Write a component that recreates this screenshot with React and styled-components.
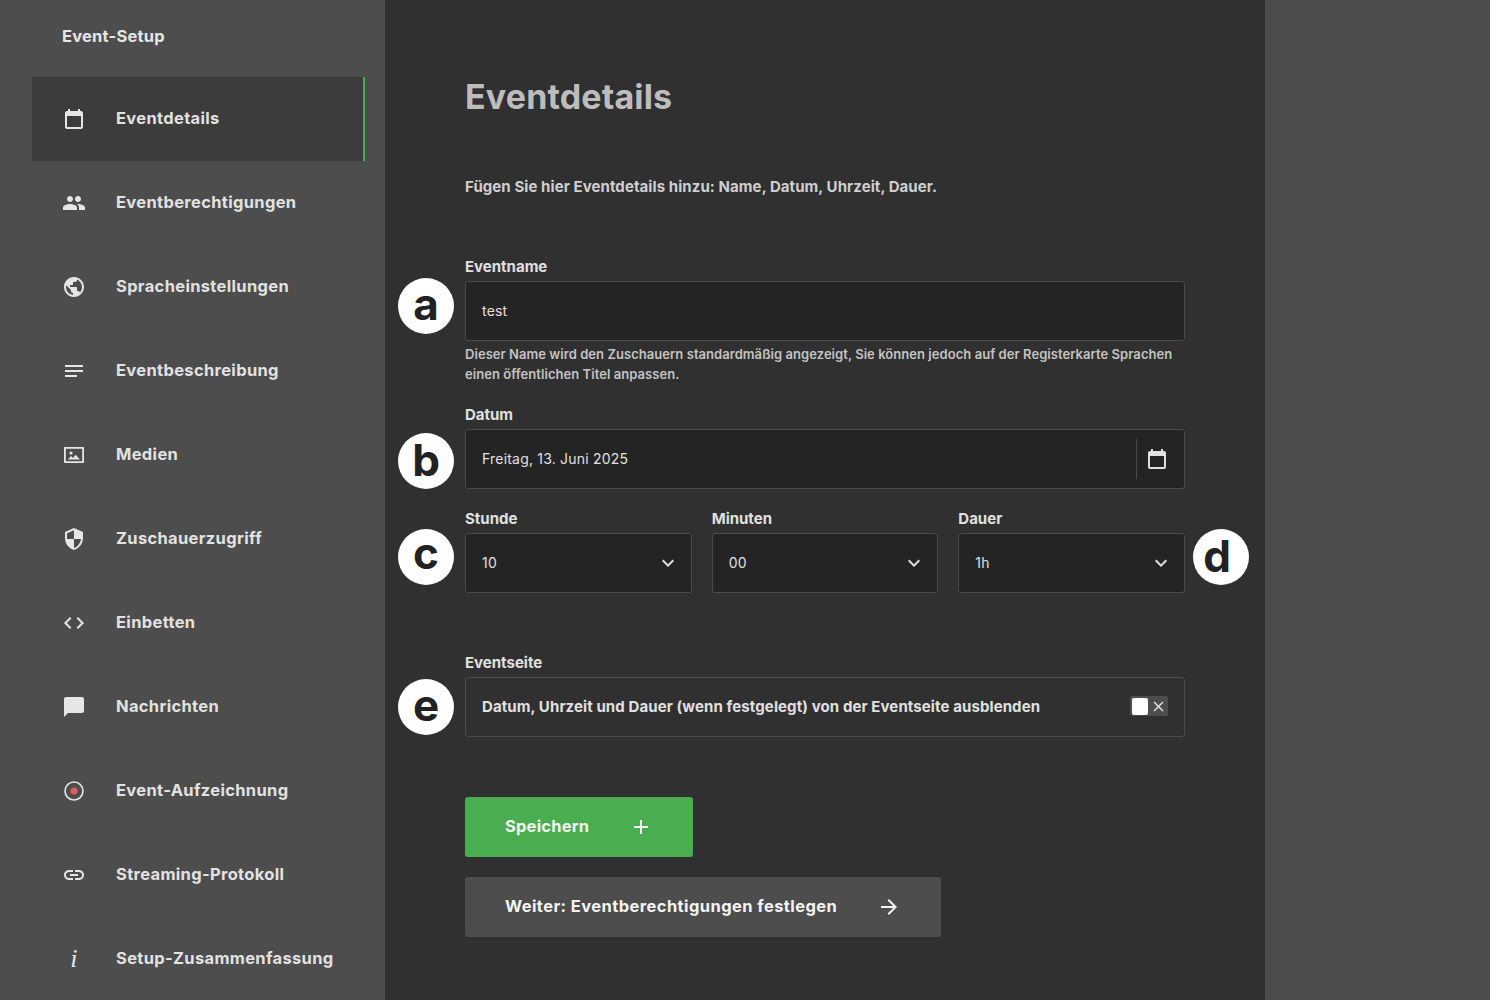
import React from "react";
import styled, { createGlobalStyle } from "styled-components";
import {
  MdPeople, MdPublic, MdNotes, MdSecurity, MdCode, MdChatBubble, MdLink,
  MdKeyboardArrowDown, MdClose, MdAdd, MdArrowForward,
} from "react-icons/md";

const GlobalStyle = createGlobalStyle`
  html, body { margin: 0; padding: 0; background: #4d4d4d; overflow: hidden; }
  * { box-sizing: border-box; }
  body { font-family: Inter, "Liberation Sans", sans-serif; }
`;

const Page = styled.div`
  display: flex;
  width: 1490px;
  height: 1000px;
  background: #4d4d4d;
  overflow: hidden;
`;

const Sidebar = styled.nav`
  flex: 0 0 385px;
  padding: 0 20px 0 32px;
`;

const SidebarTitle = styled.div`
  height: 77px;
  padding: 27px 0 0 30px;
  font-size: 16.5px;
  line-height: 18px;
  font-weight: 700;
  letter-spacing: 0.2px;
  color: #e6e6e6;
`;

const NavItem = styled.div`
  display: flex;
  align-items: center;
  height: 84px;
  padding-left: 30px;
  font-size: 16.5px;
  font-weight: 700;
  letter-spacing: 0.33px;
  color: #e2e2e2;
  background: ${(p) => (p.$active ? "#3c3c3c" : "transparent")};
  border-right: 2px solid ${(p) => (p.$active ? "#4caf50" : "transparent")};
`;

const NavIcon = styled.span`
  display: flex;
  justify-content: center;
  align-items: center;
  flex: 0 0 24px;
  width: 24px;
  height: 24px;
  margin-right: 30px;
  font-size: 24px;
  color: #e6e6e6;
`;

const NavLabel = styled.span`
  margin-bottom: 2px;
`;

const InfoGlyph = styled.span`
  font-family: "Liberation Serif", serif;
  font-style: italic;
  font-weight: 400;
  font-size: 26px;
  line-height: 24px;
`;

const Main = styled.main`
  flex: 0 0 880px;
  padding: 0 80px;
  background: #303030;
`;

const Heading = styled.h1`
  margin: 0;
  padding-top: 78px;
  font-size: 34px;
  line-height: 38px;
  font-weight: 700;
  letter-spacing: 0.15px;
  color: #bdbdbd;
`;

const Intro = styled.p`
  margin: 0;
  padding-top: 61px;
  height: 141px;
  font-size: 15px;
  line-height: 20px;
  font-weight: 700;
  letter-spacing: 0.08px;
  color: #cfcfcf;
`;

const Field = styled.div`
  position: relative;
  margin-bottom: ${(p) => p.$gap || 0}px;
`;

const Label = styled.div`
  height: 20px;
  margin-bottom: 4px;
  font-size: 15px;
  line-height: 20px;
  font-weight: 700;
  color: #e0e0e0;
`;

const InputBox = styled.div`
  display: flex;
  align-items: center;
  height: 60px;
  padding: 0 16px;
  font-size: 14px;
  letter-spacing: 0.2px;
  color: #e0e0e0;
  background: ${(p) => (p.$plain ? "transparent" : "#242424")};
  border: 1px solid #4a4a4a;
  border-radius: 3px;
`;

const InputText = styled.span`
  flex: 1;
  margin-bottom: 2px;
  ${(p) => p.$bold && "font-size: 15px; font-weight: 700; letter-spacing: 0.1px;"}
`;

const Hint = styled.div`
  padding: 3px 0 1px;
  font-size: 13px;
  line-height: 20px;
  font-weight: 600;
  letter-spacing: 0.05px;
  white-space: nowrap;
  color: #c4c4c4;
`;

const DateAddon = styled.span`
  display: flex;
  align-items: center;
  justify-content: center;
  align-self: center;
  width: 40px;
  height: 40px;
  margin-right: -8px;
  color: #e0e0e0;
  border-left: 1px solid #4a4a4a;
`;

const TimeRow = styled.div`
  display: grid;
  grid-template-columns: repeat(3, 1fr);
  gap: 20px;
  margin-bottom: 60px;
`;

const Chevron = styled(MdKeyboardArrowDown)`
  font-size: 24px;
  margin-right: -5px;
  color: #e0e0e0;
`;

const Toggle = styled.span`
  display: flex;
  align-items: center;
  justify-content: space-between;
  width: 38px;
  height: 20px;
  margin-bottom: 2px;
  padding: 1px 1px 1px 2px;
  background: #4d4d4d;
  border-radius: 2px;
  font-size: 17px;
  color: #e6e6e6;
`;

const Knob = styled.span`
  width: 16px;
  height: 17px;
  background: #fff;
  border-radius: 2px;
`;

const Marker = styled.span`
  position: absolute;
  top: ${(p) => p.$top}px;
  ${(p) => (p.$right ? "right: -64px;" : "left: -67px;")}
  display: flex;
  align-items: center;
  justify-content: center;
  width: 56px;
  height: 56px;
  padding-bottom: ${(p) => p.$lift ?? 5}px;
  padding-right: ${(p) => p.$nudge ?? 0}px;
  background: #fff;
  border-radius: 50%;
  font-family: Inter, sans-serif;
  font-size: 44px;
  line-height: 1;
  font-weight: 700;
  color: #222;
`;

const Actions = styled.div`
  display: flex;
  flex-direction: column;
  align-items: flex-start;
  gap: 20px;
  padding-top: 60px;
`;

const Button = styled.button`
  display: flex;
  align-items: center;
  justify-content: space-between;
  width: ${(p) => p.$width}px;
  height: 60px;
  padding: 0 40px;
  border: 0;
  border-radius: 3px;
  font-family: inherit;
  font-size: 16.5px;
  font-weight: 700;
  letter-spacing: ${(p) => (p.$primary ? "0.2px" : "0.42px")};
  color: #f4f4f4;
  background: ${(p) => (p.$primary ? "#4aad50" : "#4d4d4d")};
  svg { font-size: 24px; }
`;

const ButtonLabel = styled.span`
  margin-bottom: 2px;
`;

const CalendarIcon = () => (
  <svg width="24" height="24" viewBox="0 0 24 24" fill="currentColor">
    <path d="M19 4h-1V2h-2v2H8V2H6v2H5c-1.1 0-2 .9-2 2v14c0 1.1.9 2 2 2h14c1.1 0 2-.9 2-2V6c0-1.1-.9-2-2-2zm0 16H5V9h14v11z" />
  </svg>
);

const MediaIcon = () => (
  <svg width="24" height="24" viewBox="0 0 24 24" fill="currentColor">
    <path d="M21 4H3c-.6 0-1 .4-1 1v14c0 .6.4 1 1 1h18c.6 0 1-.4 1-1V5c0-.6-.4-1-1-1zm-.8 14.2H3.8V5.8h16.4v12.4z" />
    <circle cx="9" cy="10" r="1.6" />
    <path d="M6 16.5l3-3.5 2 2 2.5-3.2 4.5 4.7z" />
  </svg>
);

const RecordIcon = () => (
  <svg width="24" height="24" viewBox="0 0 24 24">
    <circle cx="12" cy="12" r="9" fill="none" stroke="#e6e6e6" strokeWidth="1.6" />
    <circle cx="12" cy="12" r="3.6" fill="#e05a5f" />
  </svg>
);

const navItems = [
  { label: "Eventdetails", icon: <CalendarIcon /> },
  { label: "Eventberechtigungen", icon: <MdPeople /> },
  { label: "Spracheinstellungen", icon: <MdPublic /> },
  { label: "Eventbeschreibung", icon: <MdNotes /> },
  { label: "Medien", icon: <MediaIcon /> },
  { label: "Zuschauerzugriff", icon: <MdSecurity /> },
  { label: "Einbetten", icon: <MdCode /> },
  { label: "Nachrichten", icon: <MdChatBubble /> },
  { label: "Event-Aufzeichnung", icon: <RecordIcon /> },
  { label: "Streaming-Protokoll", icon: <MdLink /> },
  { label: "Setup-Zusammenfassung", icon: <InfoGlyph>i</InfoGlyph> },
];

const times = [
  { label: "Stunde", value: "10" },
  { label: "Minuten", value: "00" },
  { label: "Dauer", value: "1h" },
];

export default function App() {
  return (
    <Page>
      <GlobalStyle />
      <Sidebar>
        <SidebarTitle>Event-Setup</SidebarTitle>
        {navItems.map((item, i) => (
          <NavItem key={item.label} $active={i === 0}>
            <NavIcon>{item.icon}</NavIcon>
            <NavLabel>{item.label}</NavLabel>
          </NavItem>
        ))}
      </Sidebar>
      <Main>
        <Heading>Eventdetails</Heading>
        <Intro>Fügen Sie hier Eventdetails hinzu: Name, Datum, Uhrzeit, Dauer.</Intro>
        <Field $gap={20}>
          <Label>Eventname</Label>
          <InputBox><InputText>test</InputText></InputBox>
          <Hint>
            Dieser Name wird den Zuschauern standardmäßig angezeigt, Sie können jedoch auf der Registerkarte Sprachen
            <br />
            einen öffentlichen Titel anpassen.
          </Hint>
          <Marker $top={21}>a</Marker>
        </Field>
        <Field $gap={20}>
          <Label>Datum</Label>
          <InputBox>
            <InputText>Freitag, 13. Juni 2025</InputText>
            <DateAddon><CalendarIcon /></DateAddon>
          </InputBox>
          <Marker $top={28} $lift={2}>b</Marker>
        </Field>
        <Field>
          <TimeRow>
            {times.map((t) => (
              <div key={t.label}>
                <Label>{t.label}</Label>
                <InputBox>
                  <InputText>{t.value}</InputText>
                  <Chevron />
                </InputBox>
              </div>
            ))}
          </TimeRow>
          <Marker $top={20} $lift={8}>c</Marker>
          <Marker $top={20} $lift={3} $nudge={8} $right>d</Marker>
        </Field>
        <Field>
          <Label>Eventseite</Label>
          <InputBox $plain>
            <InputText $bold>Datum, Uhrzeit und Dauer (wenn festgelegt) von der Eventseite ausblenden</InputText>
            <Toggle><Knob /><MdClose /></Toggle>
          </InputBox>
          <Marker $top={26}>e</Marker>
        </Field>
        <Actions>
          <Button $primary $width={228}><ButtonLabel>Speichern</ButtonLabel> <MdAdd /></Button>
          <Button $width={476}><ButtonLabel>Weiter: Eventberechtigungen festlegen</ButtonLabel> <MdArrowForward /></Button>
        </Actions>
      </Main>
    </Page>
  );
}
